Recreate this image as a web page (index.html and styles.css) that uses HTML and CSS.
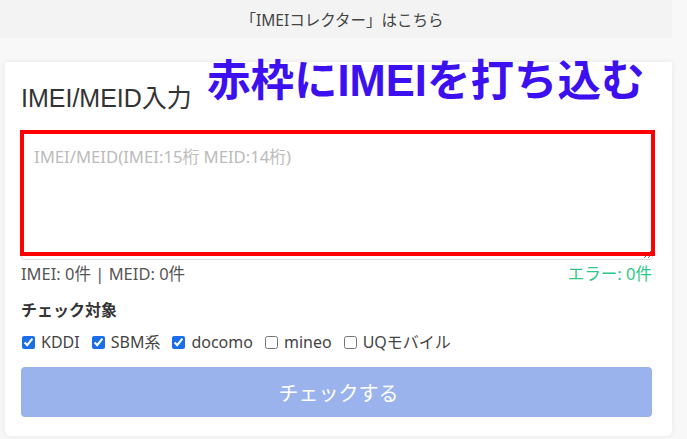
FILE: index.html
```html
<!DOCTYPE html>
<html lang="ja">
<head>
<meta charset="utf-8">
<link rel="stylesheet" href="styles.css">
</head>
<body>
<div class="page">
  <div class="topbar">「IMEIコレクター」はこちら</div>
  <div class="card">
    <div class="note">赤枠にIMEIを打ち込む</div>
    <h2 class="title">IMEI/MEID入力</h2>
    <div class="area-wrap">
      <textarea class="input" placeholder="IMEI/MEID(IMEI:15桁 MEID:14桁)"></textarea>
      <div class="red-frame"></div>
    </div>
    <div class="counts">
      <span>IMEI: 0件 | MEID: 0件</span>
      <span class="err">エラー: 0件</span>
    </div>
    <div class="label">チェック対象</div>
    <div class="checks">
      <label class="chk"><input type="checkbox" checked>KDDI</label>
      <label class="chk"><input type="checkbox" checked>SBM系</label>
      <label class="chk"><input type="checkbox" checked>docomo</label>
      <label class="chk"><input type="checkbox">mineo</label>
      <label class="chk"><input type="checkbox">UQモバイル</label>
    </div>
    <button class="btn">チェックする</button>
  </div>
</div>
</body>
</html>
```

FILE: styles.css
```css
* { box-sizing: border-box; }
html, body { margin: 0; padding: 0; }
body {
  background: #f8f8f8;
  font-family: "Noto Sans", "Noto Sans CJK JP", sans-serif;
  color: #444;
  width: 687px;
  height: 439px;
  overflow: hidden;
}
.page {
  width: 672px;
  display: flex;
  flex-direction: column;
}
.topbar {
  height: 38px;
  background: #f3f3f3;
  display: flex;
  align-items: center;
  justify-content: center;
  font-size: 15.5px;
  color: #444;
  padding-left: 12px;
}
.card {
  position: relative;
  margin: 24px 0 0 5px;
  background: #fff;
  border-radius: 0 0 6px 6px;
  box-shadow: 0 0 6px rgba(0,0,0,0.08);
  padding: 14px 20px 20px 16px;
  height: 374px;
}
.note {
  position: absolute;
  left: 202px;
  top: -6px;
  font-family: "Liberation Sans", "Noto Sans CJK JP", sans-serif;
  font-size: 43.5px;
  font-weight: bold;
  color: #3c10f0;
  line-height: 50px;
  white-space: nowrap;
}
.title {
  margin: 0;
  font-family: "Liberation Sans", "Noto Sans CJK JP", sans-serif;
  font-size: 25px;
  font-weight: normal;
  color: #333;
  line-height: 34px;
  height: 54px;
  padding-top: 5px;
}
.area-wrap {
  position: relative;
  height: 130px;
}
.input {
  display: block;
  width: 632px;
  height: 130px;
  border: 1px solid #ddd;
  border-radius: 3px;
  padding: 13px 12px;
  font-family: "Noto Sans", "Noto Sans CJK JP", sans-serif;
  font-size: 16.7px;
  resize: vertical;
  outline: none;
}
.input::placeholder { color: #bbb; }
.red-frame {
  position: absolute;
  left: -1px;
  top: 0;
  width: 635px;
  height: 126px;
  border: 4px solid #ff0000;
  pointer-events: none;
}
.counts {
  display: flex;
  justify-content: space-between;
  width: 631px;
  font-size: 16.5px;
  color: #555;
  margin-top: 4px;
  line-height: 20px;
}
.err { color: #2ec787; }
.label {
  margin-top: 16px;
  font-size: 16px;
  font-weight: bold;
  color: #333;
  line-height: 20px;
}
.checks {
  display: flex;
  gap: 11px;
  margin-top: 12px;
  font-size: 16px;
  color: #444;
  line-height: 20px;
}
.chk {
  display: flex;
  align-items: center;
  gap: 6px;
}
.chk input {
  margin: 0 0 0 1px;
  width: 13px;
  height: 13px;
  accent-color: #1a6ee8;
}
.btn {
  display: block;
  margin-top: 15px;
  width: 631px;
  height: 50px;
  border: none;
  border-radius: 4px;
  background: #9bb3ec;
  color: #fff;
  font-family: "Noto Sans", "Noto Sans CJK JP", sans-serif;
  font-size: 20px;
  padding-left: 10px;
}
```
